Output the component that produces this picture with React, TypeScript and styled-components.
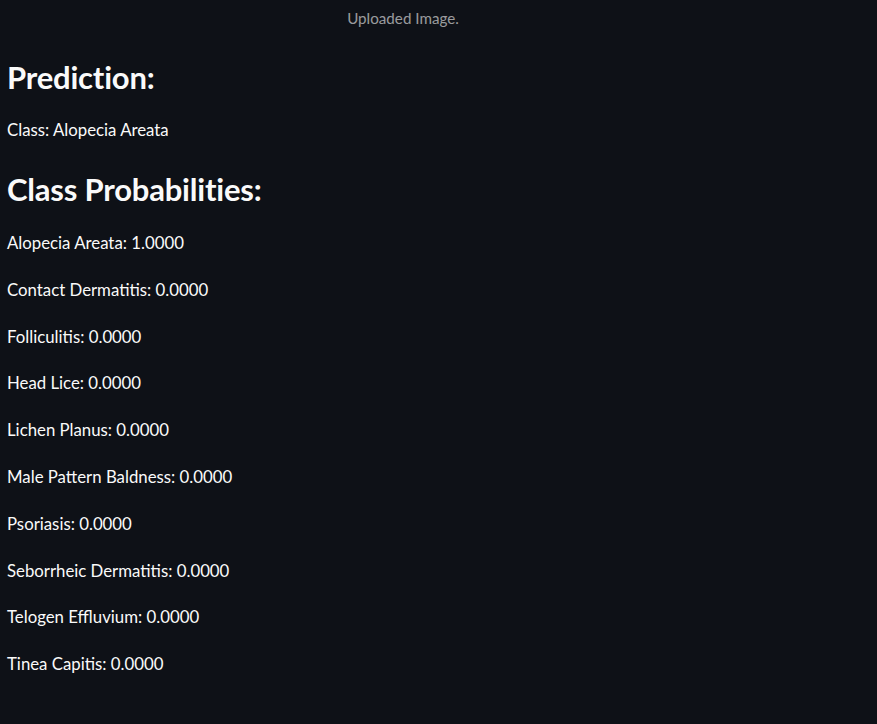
import React from "react";
import styled, { createGlobalStyle } from "styled-components";

const Global = createGlobalStyle`
  html, body {
    margin: 0;
    padding: 0;
    background: #0e1117;
  }
  body {
    font-family: Lato, "Open Sans", sans-serif;
    color: #fafafa;
  }
`;

const Main = styled.main`
  width: 877px;
  min-height: 724px;
  box-sizing: border-box;
  padding: 7px 0 0 7px;
  display: flex;
  flex-direction: column;
`;

const Caption = styled.div`
  width: 792px;
  text-align: center;
  font-size: 15.2px;
  line-height: 22px;
  color: rgba(250, 250, 250, 0.6);
`;

const Heading = styled.h3<{ $top: number }>`
  margin: ${(p) => p.$top}px 0 0 0;
  font-size: 31px;
  font-weight: 700;
  line-height: 40px;
  letter-spacing: -0.2px;
`;

const Text = styled.p<{ $top: number }>`
  margin: ${(p) => p.$top}px 0 0 0;
  font-size: 16.8px;
  line-height: 26px;
`;

const List = styled.div`
  display: flex;
  flex-direction: column;
  gap: 20.8px;
  margin-top: 21px;
`;

const Row = styled.p`
  margin: 0;
  font-size: 16.8px;
  line-height: 26px;
`;

const probs: [string, string][] = [
  ["Alopecia Areata", "1.0000"],
  ["Contact Dermatitis", "0.0000"],
  ["Folliculitis", "0.0000"],
  ["Head Lice", "0.0000"],
  ["Lichen Planus", "0.0000"],
  ["Male Pattern Baldness", "0.0000"],
  ["Psoriasis", "0.0000"],
  ["Seborrheic Dermatitis", "0.0000"],
  ["Telogen Effluvium", "0.0000"],
  ["Tinea Capitis", "0.0000"],
];

export default function App() {
  return (
    <>
      <Global />
      <Main>
        <Caption>Uploaded Image.</Caption>
        <Heading $top={28}>Prediction:</Heading>
        <Text $top={20}>Class: Alopecia Areata</Text>
        <Heading $top={26}>Class Probabilities:</Heading>
        <List>
          {probs.map(([name, v]) => (
            <Row key={name}>
              {name}: {v}
            </Row>
          ))}
        </List>
      </Main>
    </>
  );
}
